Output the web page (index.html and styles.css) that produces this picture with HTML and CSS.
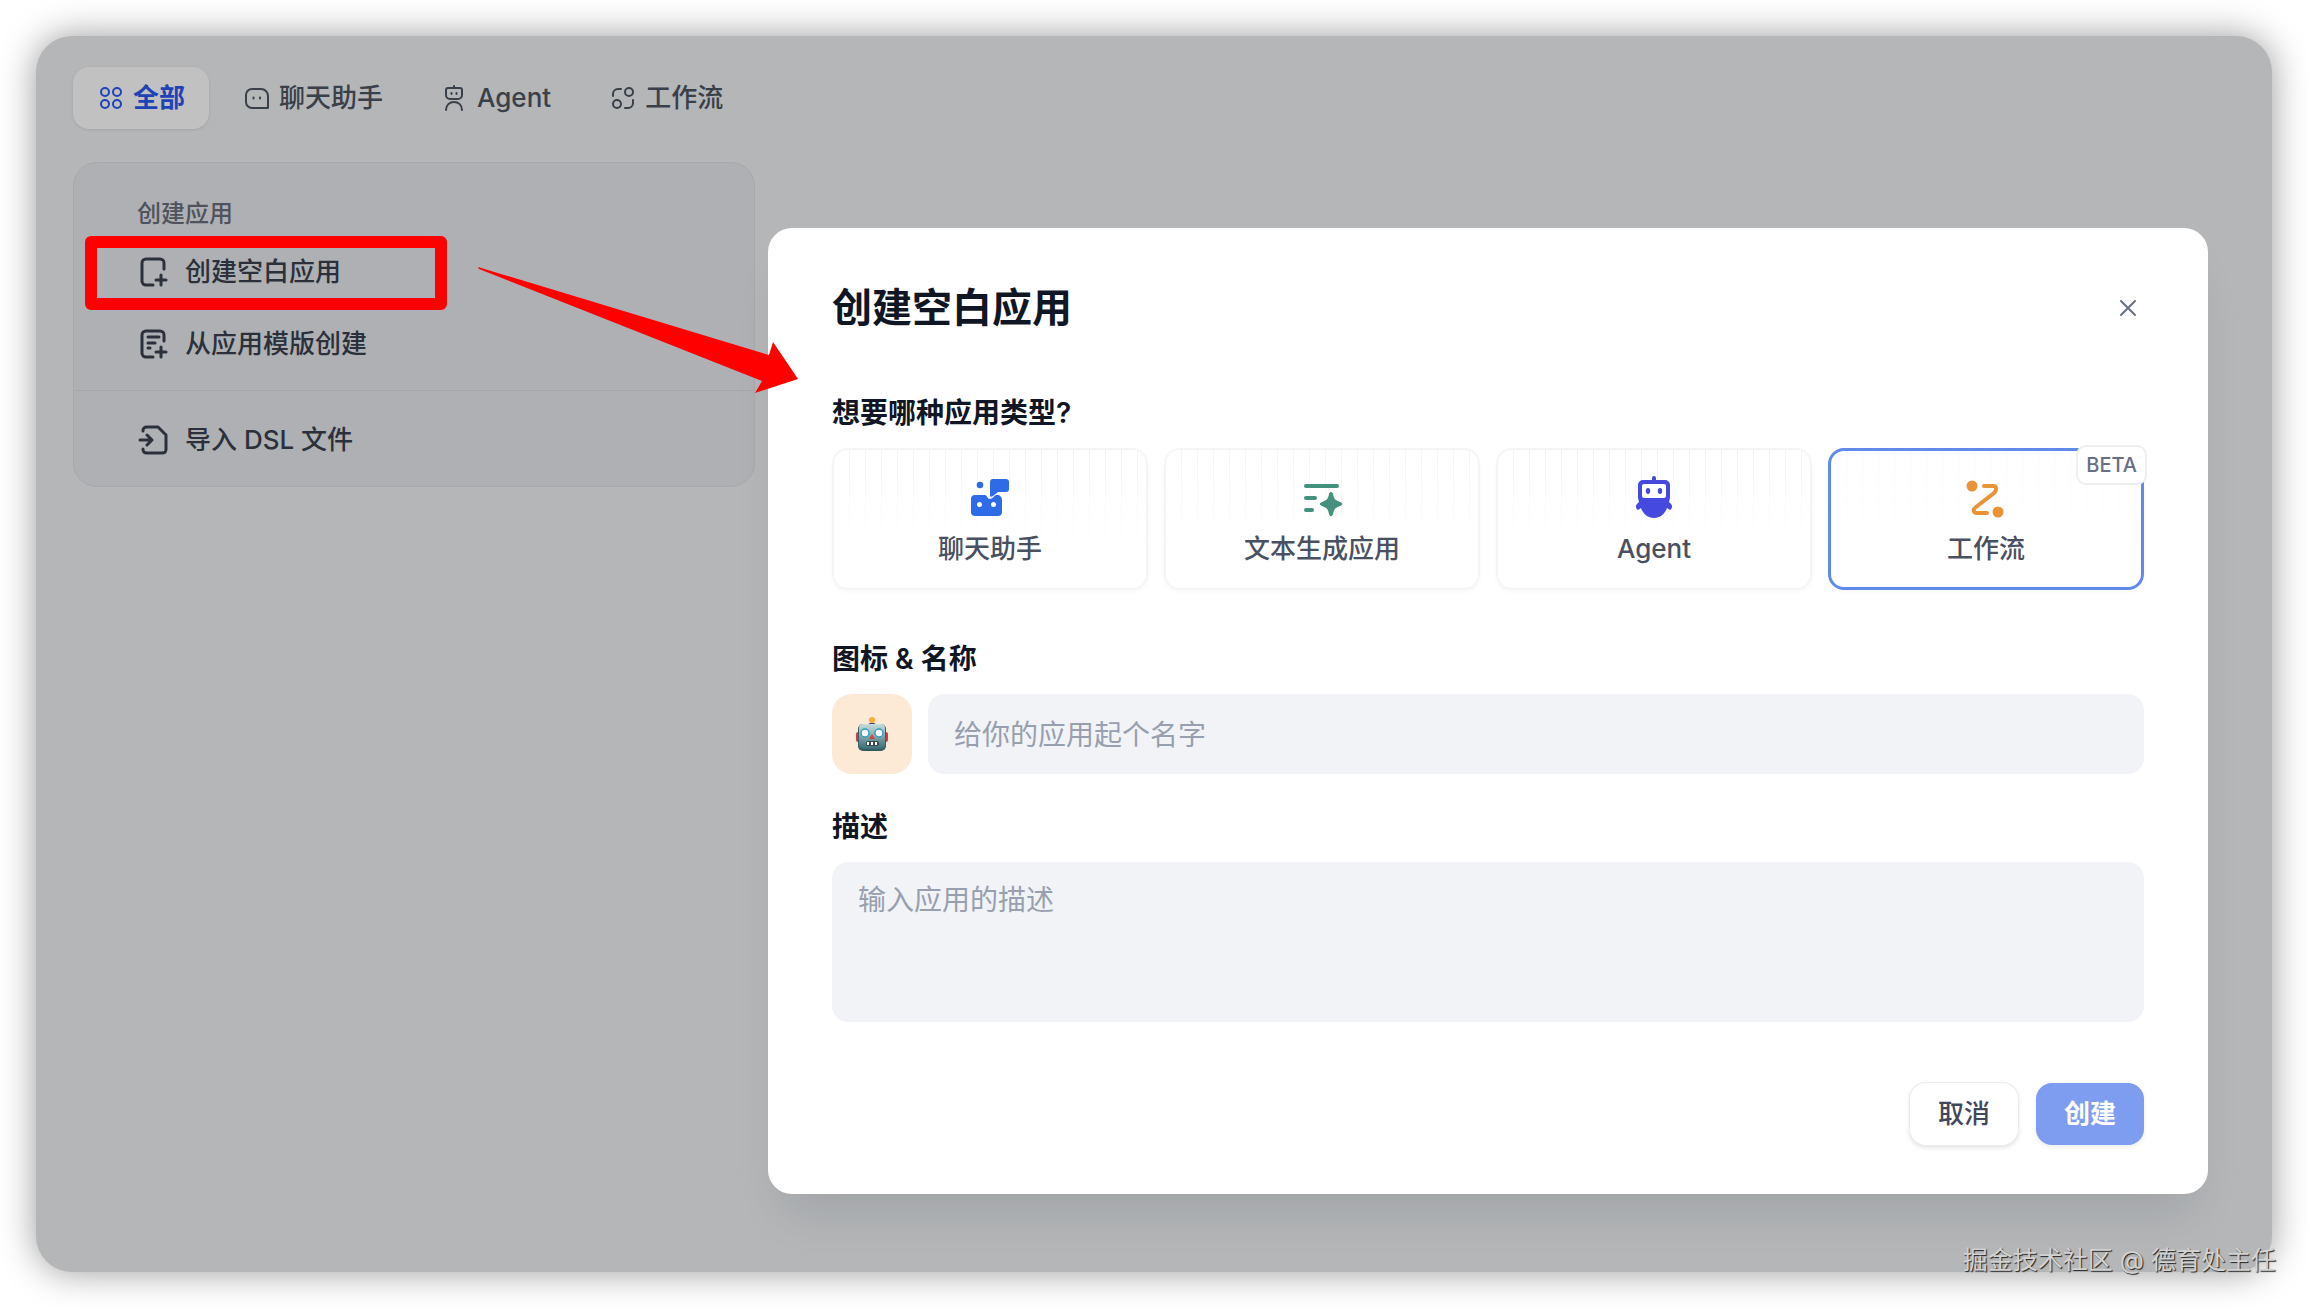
FILE: index.html
```html
<!DOCTYPE html>
<html lang="zh-CN">
<head>
  <meta charset="UTF-8" />
  <meta name="viewport" content="width=device-width, initial-scale=1.0"/>
  <title>创建空白应用</title>
  <link rel="stylesheet" href="styles.css">
</head>
<body>

<div class="window">
    <nav class="tabs">
        <button class="active">
            <svg class="tab-icon" viewBox="0 0 26 26"><circle cx="8" cy="7" r="4"/><circle cx="20" cy="7" r="4"/><circle cx="8" cy="19" r="4"/><circle cx="20" cy="19" r="4"/></svg>
            全部
        </button>
        <button>
            <svg class="tab-icon" viewBox="0 0 26 26"><path d="M9 4h9a7 7 0 0 1 7 7v12H9a6 6 0 0 1-6-6v-7a6 6 0 0 1 6-6z"/><path d="M10.500 12.500v1M17 12.500v1"/></svg>
            聊天助手
        </button>
        <button>
            <svg class="tab-icon" viewBox="0 0 26 26"><path d="M13 1v2M7 3h12a2 2 0 0 1 2 2v5a4 4 0 0 1-4 4H9a4 4 0 0 1-4-4V5a2 2 0 0 1 2-2zM10.500 8v1M15.500 8v1M5 25c0-5 3.500-8 8-8s8 3 8 8"/></svg>
            Agent
        </button>
        <button>
            <svg class="tab-icon" viewBox="0 0 26 26"><circle cx="20" cy="7" r="4"/><circle cx="8" cy="19" r="4"/><path d="M4 11V9a5 5 0 0 1 5-5h3M24 15v3a5 5 0 0 1-5 5h-3"/></svg>
            工作流
        </button>
    </nav>

    <!-- Create app menu -->
    <div class="create-card">
        <div class="create-group">
            <h3>创建应用</h3>
            <button class="highlight">
                <svg class="menu-icon" viewBox="0 0 32 32"><path d="M27 13V7a4 4 0 0 0-4-4H9a4 4 0 0 0-4 4v18a4 4 0 0 0 4 4h7M24 19v10M19 24h10"/></svg>
                创建空白应用
            </button>
            <button>
                <svg class="menu-icon" viewBox="0 0 32 32"><path d="M27 13V7a4 4 0 0 0-4-4H9a4 4 0 0 0-4 4v18a4 4 0 0 0 4 4h7M24 19v10M19 24h10M11 9h11M11 15h7M11 20h2"/></svg>
                从应用模版创建
            </button>
        </div>
        <div class="create-group">
            <button>
                <svg class="menu-icon" viewBox="0 0 32 32"><path d="M6 7c0-3 1-4 4-4h11l8 8v14c0 3-1 4-4 4H10c-3 0-4-1-4-4M3 16h12M10 11l5 5-5 5"/></svg>
                导入 DSL 文件
            </button>
        </div>
    </div>

    <!-- Create dialog -->
    <div class="overlay">
        <form class="modal">
            <div class="modal-header">
                <h2>创建空白应用</h2>
                <button type="button" class="close-button" aria-label="关闭">
                    <svg viewBox="0 0 16 16"><path d="M1 1l14 14M15 1L1 15"/></svg>
                </button>
            </div>

            <h4>想要哪种应用类型?</h4>
            <div class="types">
                <button type="button" class="type chat">
                    <svg class="type-icon" viewBox="0 0 48 48"><circle cx="14" cy="11" r="3.300"/><path d="M26 5h14a3 3 0 0 1 3 3v7a3 3 0 0 1-3 3h-8l-5 4c-2 1-3 1-3-1V8a3 3 0 0 1 2-3z"/><path fill-rule="evenodd" d="M9 21h10c2 0 2 4 5 4 2 0 4-3 6-4h1c3 0 5 2 5 5v12a4 4 0 0 1-4 4H9a4 4 0 0 1-4-4V25a4 4 0 0 1 4-4zM13.500 28a2.500 2.500 0 1 0 0 5 2.500 2.500 0 0 0 0-5zM27.500 28a2.500 2.500 0 1 0 0 5 2.500 2.500 0 0 0 0-5z"/></svg>
                    聊天助手
                </button>
                <button type="button" class="type text">
                    <svg class="type-icon" viewBox="0 0 48 48"><path class="line" d="M8 12h31M8 24h9M8 36h6"/><path d="M33 18c1 0 2 1 2 2 1 5 2 6 7 8 3 1 3 3 0 4-5 2-6 3-7 8-1 3-3 3-4 0-1-5-2-6-7-8-3-1-3-3 0-4 5-2 6-3 7-8 0-1 1-2 2-2z"/></svg>
                    文本生成应用
                </button>
                <button type="button" class="type agent">
                    <svg class="type-icon" viewBox="0 0 48 48"><path fill-rule="evenodd" d="M24 2a2 2 0 0 1 2 2v2h9a5 5 0 0 1 5 5v13l-1 4 2 2c2 2 1 5-1 6l-3-2c-2 6-7 10-13 10s-11-4-13-10l-3 2c-2-1-3-4-1-6l2-2-1-4V11a5 5 0 0 1 5-5h9V4a2 2 0 0 1 2-2zM14 10a2 2 0 0 0-2 2v10a2 2 0 0 0 2 2h20a2 2 0 0 0 2-2V12a2 2 0 0 0-2-2z"/><ellipse cx="18" cy="17" rx="2.200" ry="3"/><ellipse cx="30" cy="17" rx="2.200" ry="3"/></svg>
                    Agent
                </button>
                <button type="button" class="type workflow selected">
                    <svg class="type-icon" viewBox="0 0 48 48"><circle cx="10" cy="12" r="5.500"/><circle cx="36" cy="38" r="5.500"/><path class="line" d="M22 12h9c4 0 4 4 1 7L14 33c-4 3-2 6 1 6h10"/></svg>
                    工作流
                    <span class="badge">BETA</span>
                </button>
            </div>

            <label for="appName">图标 &amp; 名称</label>
            <div class="name-row">
                <button type="button" class="app-icon" aria-label="图标">
                    <svg viewBox="0 0 32 36">
                        <defs>
                            <linearGradient id="face" x1="0" y1="0" x2="0" y2="1"><stop offset="0" stop-color="#c8dfdf"/><stop offset="1" stop-color="#376c74"/></linearGradient>
                        </defs>
                        <rect x="0" y="16" width="32" height="10" rx="2" fill="#c93d48"/>
                        <path d="M12 9c0-3 8-3 8 0z" fill="#45436b"/>
                        <circle cx="16" cy="4" r="3" fill="#f4af3c"/>
                        <rect x="2" y="8" width="28" height="27" rx="5" fill="#315b61"/>
                        <rect x="3" y="8" width="26" height="25" rx="4" fill="url(#face)"/>
                        <circle cx="9" cy="17" r="4" fill="#fff" stroke="#2f9fc0" stroke-width="1.500"/>
                        <circle cx="23" cy="17" r="4" fill="#fff" stroke="#2f9fc0" stroke-width="1.500"/>
                        <path d="M16 18l3 5h-6z" fill="#d4433f"/>
                        <rect x="10" y="25" width="13" height="5" rx="2" fill="#39484d"/>
                        <path d="M12 26v3M16 26v3M20 26v3" stroke="#fff" stroke-width="2"/>
                    </svg>
                </button>
                <input type="text" id="appName" placeholder="给你的应用起个名字">
            </div>

            <label for="appDesc">描述</label>
            <textarea id="appDesc" placeholder="输入应用的描述"></textarea>

            <div class="actions">
                <button type="button" class="cancel-button">取消</button>
                <button type="button" class="create-button">创建</button>
            </div>
        </form>
    </div>

    <!-- Arrow from the menu item to the dialog -->
    <svg class="arrow" viewBox="0 0 322 128"><path d="M0 0L291 88L295 75L320 112L277 126L284 114L1 2z"/></svg>
</div>

<div class="watermark">掘金技术社区 @ 德育处主任</div>

</body>
</html>
```
FILE: styles.css
```css
* {
    box-sizing: border-box;
}

body {
    font-family: Inter, "Noto Sans CJK SC", sans-serif;
    background-color: #fff;
    margin: 0;
    padding: 36px;
}

h2, h3, h4 {
    margin: 0;
}

button {
    font-family: inherit;
    line-height: 36px;
    border: none;
    background: none;
    padding: 0;
    cursor: pointer;
}

svg {
    display: block;
    flex-shrink: 0;
}

.window {
    position: relative;
    min-height: calc(100vh - 72px);
    padding: 31px 37px;
    border-radius: 36px;
    background-color: #b4b6b8;
    box-shadow: 0 0 36px rgba(0, 0, 0, 0.4);
}

/* Tabs */
.tabs {
    display: flex;
    gap: 10px;
    margin-bottom: 33px;
}

.tabs button {
    display: flex;
    align-items: center;
    gap: 10px;
    height: 62px;
    padding: 0 24px;
    border-radius: 16px;
    font-size: 26px;
    font-weight: 500;
    color: #3a4049;
}

.tabs button.active {
    background-color: #c1c1c2;
    color: #1e43b4;
    font-weight: 600;
    box-shadow: 0 1px 3px rgba(0, 0, 0, 0.1);
}

.tab-icon {
    width: 26px;
    height: 26px;
}

.tab-icon, .menu-icon, .close-button svg {
    fill: none;
    stroke: currentColor;
    stroke-width: 2;
    stroke-linecap: round;
    stroke-linejoin: round;
}

/* Create app menu */
.create-card {
    width: 682px;
    border: 1px solid #a7a9ad;
    border-radius: 24px;
    background-color: #aeb0b4;
}

.create-group {
    padding: 13px 11px 10px;
}

.create-group + .create-group {
    border-top: 1px solid #a4a7ab;
}

.create-group h3 {
    padding: 20px 52px 4px;
    font-size: 24px;
    line-height: 36px;
    font-weight: 500;
    color: #4e535d;
}

.create-group button {
    position: relative;
    display: flex;
    align-items: center;
    gap: 16px;
    width: 362px;
    height: 72px;
    padding: 0 52px;
    font-size: 26px;
    font-weight: 500;
    color: #2b303b;
    white-space: nowrap;
}

.create-group button.highlight::after {
    content: "";
    position: absolute;
    inset: 0 0 -2px;
    border: 12px solid #f00;
    border-radius: 6px;
}

.menu-icon {
    width: 32px;
    height: 32px;
    stroke-width: 3;
}

.arrow {
    position: absolute;
    left: 442px;
    top: 231px;
    width: 322px;
    fill: #f00;
}

/* Dialog */
.overlay {
    position: absolute;
    inset: 0;
    display: flex;
    padding: 192px 64px 78px 732px;
}

.modal {
    flex: 1;
    padding: 56px 64px 49px;
    border-radius: 24px;
    background-color: #fff;
    box-shadow: 0 32px 48px -16px rgba(16, 24, 32, 0.12);
}

.modal-header {
    display: flex;
    justify-content: space-between;
    align-items: center;
    margin-bottom: 61px;
}

.modal-header h2 {
    font-size: 40px;
    line-height: 48px;
    color: #111625;
}

.close-button {
    padding: 8px;
    color: #676f83;
}

.close-button svg {
    width: 16px;
    height: 16px;
}

.modal h4, .modal label {
    display: block;
    margin-bottom: 15px;
    font-size: 28px;
    line-height: 40px;
    font-weight: 600;
    color: #111625;
}

.types {
    display: grid;
    grid-template-columns: repeat(4, 1fr);
    gap: 16px;
    margin-bottom: 49px;
}

.type {
    position: relative;
    z-index: 0;
    display: flex;
    flex-direction: column;
    align-items: center;
    gap: 9px;
    height: 142px;
    padding-top: 24px;
    border: 2px solid #f5f5f7;
    border-radius: 16px;
    font-size: 26px;
    font-weight: 500;
    color: #495062;
    box-shadow: 0 2px 4px rgba(16, 24, 40, 0.03);
}

/* faint stripes that fade out downwards */
.type::before {
    content: "";
    position: absolute;
    inset: 0;
    background: linear-gradient(to bottom, transparent, #fff 70%),
        repeating-linear-gradient(to right, transparent 0 15px, #f0f3f8 15px 16px);
    border-radius: 14px;
    z-index: -1;
}

.type.selected {
    border: 3px solid #618aeb;
    padding-top: 23px;
}

.type.selected::before {
    opacity: 0.4;
}

.type-icon {
    width: 48px;
    height: 48px;
    fill: currentColor;
}

.type-icon .line {
    fill: none;
    stroke: currentColor;
    stroke-width: 4;
    stroke-linecap: round;
}

.chat .type-icon {
    color: #2f6be6;
}

.text .type-icon {
    color: #44917d;
}

.agent .type-icon {
    color: #4549e0;
}

.workflow .type-icon {
    color: #e99236;
}

.badge {
    position: absolute;
    top: -6px;
    right: -6px;
    padding: 4px 8px;
    border: 2px solid #eeeff1;
    border-radius: 10px;
    background-color: #fff;
    font-size: 20px;
    line-height: 28px;
    color: #676f83;
}

.name-row {
    display: flex;
    gap: 16px;
    margin-bottom: 33px;
}

.app-icon {
    display: flex;
    align-items: center;
    justify-content: center;
    width: 80px;
    height: 80px;
    border-radius: 20px;
    background-color: #fdead6;
}

.app-icon svg {
    width: 32px;
    height: 36px;
}

input, textarea {
    border: none;
    border-radius: 16px;
    background-color: #f1f3f7;
    font-family: inherit;
    font-size: 28px;
    color: #111625;
}

input {
    flex: 1;
    height: 80px;
    padding: 2px 26px 0;
}

textarea {
    display: block;
    width: 100%;
    height: 160px;
    padding: 18px 26px;
    line-height: 40px;
    resize: none;
}

input::placeholder, textarea::placeholder {
    color: #989fae;
}

.actions {
    display: flex;
    justify-content: flex-end;
    gap: 18px;
    margin-top: 61px;
}

.actions button {
    width: 108px;
    height: 62px;
    border-radius: 16px;
    font-size: 26px;
    font-weight: 500;
}

.cancel-button {
    color: #414859;
    background-color: #fff;
    box-shadow: 0 0 0 1px #ebecef, 0 2px 5px rgba(16, 24, 40, 0.16);
}

.actions .create-button {
    color: #fff;
    background-color: #7f9df0;
    font-weight: 600;
    box-shadow: 0 2px 4px rgba(16, 24, 40, 0.08);
}

.watermark {
    position: absolute;
    right: 32px;
    bottom: 30px;
    font-size: 25px;
    line-height: 36px;
    color: #d2d2d2;
    text-shadow: 1px 1px 1px #222;
}
```
